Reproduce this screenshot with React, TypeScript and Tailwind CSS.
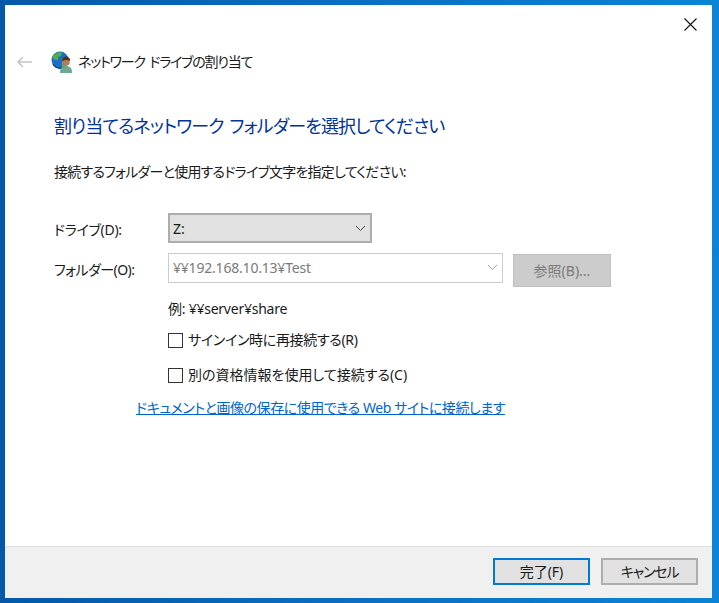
const FONT = "font-['Noto_Sans','Noto_Sans_CJK_JP',sans-serif] [font-feature-settings:'palt']";

function NetworkIcon() {
  return (
    <svg width="22" height="22" viewBox="0 0 22 22" aria-hidden>
      <circle cx="9" cy="9" r="8.500" fill="#1d6fc4" />
      <path d="M4 3c2-2 5-2 7-1l-1 3-3 1 0 3-3 0-3-3z" fill="#4fae4a" />
      <path d="M11 10l4 1-1 4-3 1z" fill="#55b257" />
      <path d="M2 13a8.500 8.500 0 0 0 9 4" stroke="#0c3f86" strokeWidth="1.400" fill="none" />
      <path d="M9 22c0-5 2-7 6-7s6 2 6 7z" fill="#6ea88f" />
      <circle cx="15" cy="11" r="3.800" fill="#b77c55" />
      <path d="M11 10c0-3 2-4.500 4-4.500s4.500 1.500 4 4.500c-2-1.500-5-1.500-8 0z" fill="#4a3526" />
    </svg>
  );
}

function Checkbox({ label, className = "" }: { label: string; className?: string }) {
  return (
    <label className="flex items-center gap-[5px] h-[20px]">
      <span className="w-[15px] h-[15px] border border-[#333] bg-white shrink-0" />
      <span className={`text-[14px] text-[#1a1a1a] leading-[20px] ${className}`}>{label}</span>
    </label>
  );
}

function Chevron({ color }: { color: string }) {
  return (
    <svg width="11" height="7" viewBox="0 0 11 7" aria-hidden>
      <path d="M1 1l4.500 4.500L10 1" fill="none" stroke={color} strokeWidth="1" />
    </svg>
  );
}

export default function App() {
  return (
    <div className={`${FONT} w-[719px] h-[603px] overflow-hidden bg-gradient-to-r from-[#0558a8] via-[#0a6fc2] to-[#0a84d6] pt-[5px] pl-[5px]`}>
      <div className="w-[707px] h-[593px] bg-white flex flex-col">
        <div className="flex-1 min-h-0">
          <div className="flex justify-end pt-[13px] pr-[15px] h-[40px]">
            <svg width="13" height="13" viewBox="0 0 13 13" aria-hidden>
              <path d="M0.500 0.500l12 12M12.500 0.500l-12 12" stroke="#111" strokeWidth="1.100" />
            </svg>
          </div>
          <div className="flex items-center h-[32px] mt-[1px] pl-[11px]">
            <svg width="16" height="12" viewBox="0 0 16 12" aria-hidden>
              <path d="M7 1L2 6l5 5M2 6h14" fill="none" stroke="#c4c4c4" strokeWidth="1.600" />
            </svg>
            <span className="ml-[19px] mr-[5px] flex"><NetworkIcon /></span>
            <span className="text-[14px] tracking-[-1.2px] [word-spacing:2px] text-[#1a1a1a] leading-[20px]">ネットワーク ドライブの割り当て</span>
          </div>
          <div className="pl-[49px] mt-[35px]">
            <h1 className="text-[18px] tracking-[-0.85px] [word-spacing:2px] font-normal leading-[26px] text-[#003399]">割り当てるネットワーク フォルダーを選択してください</h1>
            <p className="text-[14px] tracking-[-0.77px] text-[#1a1a1a] leading-[20px] mt-[23px]">接続するフォルダーと使用するドライブ文字を指定してください:</p>

            <div className="flex items-center mt-[31px] h-[30px]">
              <span className="w-[114px] text-[14px] tracking-[-0.3px] text-[#1a1a1a] pt-[3px]">ドライブ(D):</span>
              <div className="w-[204px] h-[30px] bg-[#e1e1e1] border-2 border-[#adadad] flex items-center justify-between pl-[3px] pr-[4px]">
                <span className="text-[14px] text-[#1a1a1a]">Z:</span>
                <Chevron color="#444" />
              </div>
            </div>

            <div className="flex items-center mt-[9px] h-[31px]">
              <span className="w-[114px] text-[14px] tracking-[-0.55px] text-[#1a1a1a] pt-[3px]">フォルダー(O):</span>
              <div className="w-[335px] h-[30px] bg-white border border-[#ccc] flex items-center justify-between pl-[4px] pr-[4px]">
                <span className="text-[14px] tracking-[-0.2px] text-[#7a7a7a]">¥¥192.168.10.13¥Test</span>
                <Chevron color="#a0a0a0" />
              </div>
              <div className="ml-[10px] mt-[5px] w-[98px] h-[33px] bg-[#cccccc] border border-[#bfbfbf] flex items-center justify-center text-[14px] text-[#7a7a7a]">参照(B)...</div>
            </div>

            <div className="pl-[114px]">
              <p className="text-[14px] tracking-[-0.24px] text-[#1a1a1a] leading-[20px] mt-[16px]">例: ¥¥server¥share</p>
              <div className="mt-[11px]"><Checkbox label="サインイン時に再接続する(R)" className="tracking-[-0.33px]" /></div>
              <div className="mt-[15px]"><Checkbox label="別の資格情報を使用して接続する(C)" /></div>
            </div>
            <a className="block w-fit ml-[82px] mt-[13px] text-[14px] tracking-[-0.47px] leading-[20px] text-[#0066cc] underline">ドキュメントと画像の保存に使用できる Web サイトに接続します</a>
          </div>
        </div>
        <div className="h-[52px] bg-[#f0f0f0] border-t border-[#dfdfdf] flex justify-end gap-[11px] pt-[11px] pr-[14px]">
          <div className="w-[97px] h-[27px] bg-[#e1e1e1] border-2 border-[#0078d7] flex items-center justify-center text-[14px] text-[#1a1a1a]">完了(F)</div>
          <div className="w-[97px] h-[27px] bg-[#e1e1e1] border-2 border-[#adadad] flex items-center justify-center text-[14px] tracking-[-1.2px] text-[#1a1a1a]">キャンセル</div>
        </div>
      </div>
    </div>
  );
}
